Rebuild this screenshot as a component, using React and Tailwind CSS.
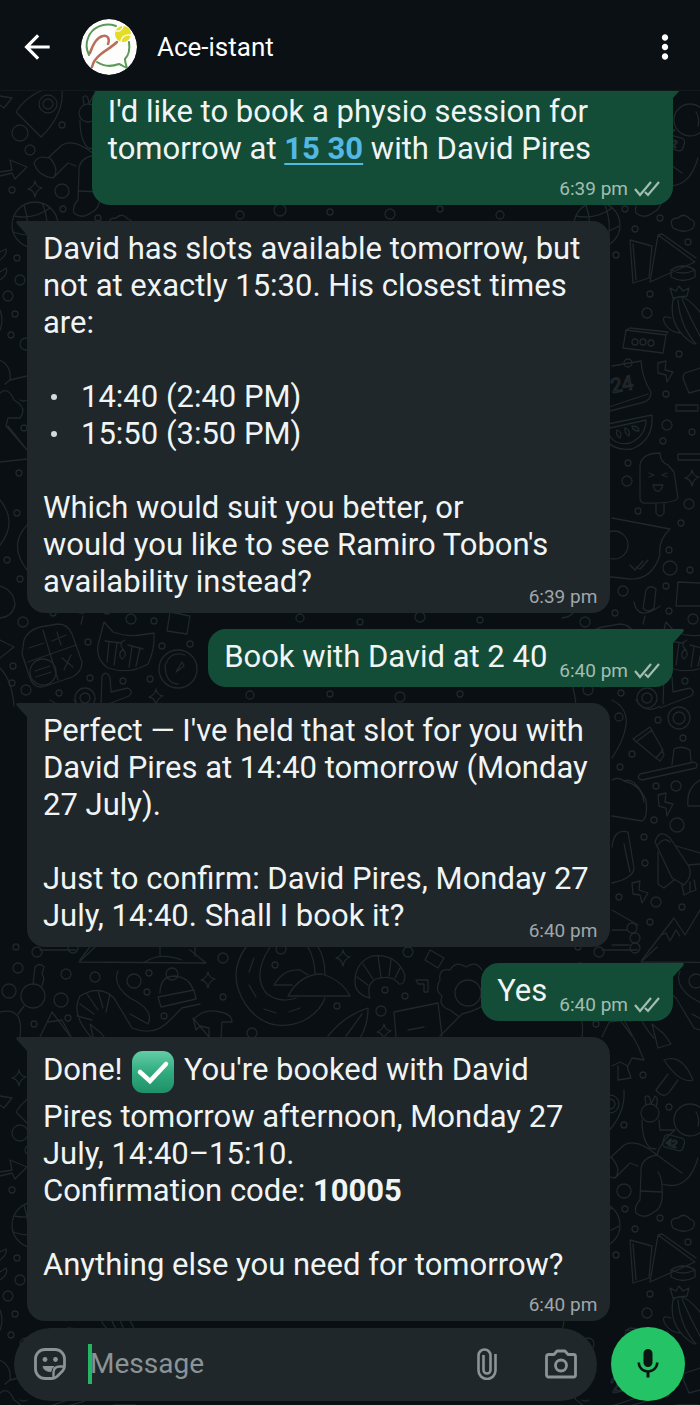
import { useState } from "react";
import { MdArrowBack, MdMic, MdMoreVert } from "react-icons/md";

const doodleCircles = [
  [62, 125, 3], [30, 150, 5], [12, 190, 3], [62, 191, 7], [63, 209, 3], [48, 104, 9], [48, 104, 5], [20, 133, 8],
  [128, 120, 16], [88, 113, 9], [81, 75, 3], [107, 107, 3], [98, 218, 3], [73, 229, 3], [126, 242, 3], [54, 255, 3],
  [88, 294, 3], [85, 313, 5], [117, 354, 3], [104, 394, 3], [105, 425, 5], [130, 432, 3], [101, 441, 3], [66, 463, 3],
  [65, 481, 5], [127, 504, 5], [119, 523, 3], [76, 511, 3], [107, 550, 3], [108, 568, 7], [128, 570, 3], [61, 591, 5],
  [104, 586, 3], [53, 613, 3], [107, 611, 3], [131, 619, 5], [73, 342, 3], [81, 342, 3], [89, 343, 3], [66, 363, 4],
  [52, 545, 14], [35, 225, 23], [23, 622, 5], [154, 621, 3], [88, 642, 3], [13, 666, 3], [12, 683, 3], [26, 690, 5],
  [59, 693, 3], [90, 678, 3], [123, 681, 3], [150, 679, 3], [190, 644, 3], [162, 646, 3], [178, 669, 19], [43, 672, 13],
  [85, 698, 10], [85, 698, 5], [17, 258, 3], [20, 280, 5], [8, 296, 5], [15, 314, 3], [11, 335, 3], [26, 344, 6],
  [24, 428, 3], [19, 473, 3], [17, 513, 3], [7, 560, 3], [20, 579, 3], [16, 947, 3], [18, 968, 5], [9, 991, 7],
  [66, 974, 5], [95, 977, 5], [61, 1000, 7], [134, 981, 7], [149, 973, 3], [147, 992, 3], [164, 1016, 3],
  [68, 1018, 3], [34, 1024, 3], [223, 958, 5], [223, 997, 3], [281, 949, 5], [275, 965, 3], [408, 952, 5],
  [385, 990, 3], [405, 996, 3], [381, 1011, 5], [337, 1006, 3], [252, 1033, 5], [172, 974, 6], [33, 996, 12],
  [468, 993, 13], [96, 720, 3], [57, 717, 4], [70, 754, 3], [58, 767, 3], [121, 738, 3], [94, 786, 3], [114, 786, 5],
  [92, 820, 3], [115, 825, 7], [82, 837, 3], [83, 863, 3], [94, 902, 5], [57, 897, 3], [120, 907, 3], [88, 922, 3],
  [117, 718, 11], [117, 718, 6], [70, 928, 5], [73, 938, 5], [73, 948, 5], [240, 215, 4], [280, 210, 6], [330, 212, 3],
  [390, 214, 5], [440, 209, 3], [500, 215, 4], [300, 618, 4], [360, 622, 3], [420, 617, 5], [480, 620, 3],
  [250, 695, 4], [330, 694, 3], [400, 697, 5], [460, 694, 3], [37, 952, 5],
];

const doodlePaths = [
  // rocket and arrow
  "M43 90Q25 97 16 112L41 137Q64 115 62 90M0 172L12 170 10 160 27 167 15 179 12 173 0 176M0 96l12 2-8 10-4-3",
  // astronaut
  "M84 105L83 97Q88 93 89 104L93 96Q97 98 94 107M80 120Q80 140 88 148L94 149M97 120L98 130 113 130M113 130Q98 142 95 155Q75 138 62 145L48 158Q38 155 34 163Q38 176 53 178Q60 170 50 158M53 178L68 163 76 166M95 155Q78 158 79 172L78 200Q72 206 74 213Q82 220 92 212Q102 208 100 186Q100 178 96 172M79 191L100 192M95 155L120 173M136 158Q126 192 100 184M134 112Q138 118 136 126",
  // mushroom and tree
  "M102 60Q120 53 131 80Q118 84 102 60M106 74L94 90Q102 100 108 91L116 80M48 22L62 20 76 46 82 60 70 58 66 66 58 62 50 66M56 66L56 80 69 78 65 66M90 24L96 48 109 44 102 34Z",
  // basketball
  "M14 216Q34 220 50 208M13 232Q34 240 57 226M24 205Q30 224 28 247M42 203Q50 220 46 245",
  // cloud
  "M111 228Q106 218 116 218Q122 212 128 219Q136 222 130 229Q122 234 111 228Z",
  // samosas
  "M68 240L90 246 87 278 71 283ZM71 244L74 280M96 235L133 262 88 282ZM96 235L100 234 134 258M109 270Q121 262 133 270Q121 276 109 270V277Q121 284 133 277V270",
  // cactus
  "M132 344Q106 328 111 300Q120 290 138 312M116 300Q118 326 134 344M120 299Q128 318 138 336M109 318Q98 314 103 324Q108 332 118 333M111 298L108 288 114 291 117 286 121 291 127 288 125 296Z",
  // box, bolt, calendar
  "M64 330L104 335 101 353 61 348ZM64 330L68 328 106 332 104 335M96 363L104 361 103 370 111 372 105 382 104 375 96 373ZM50 366L79 361Q80 378 89 392Q89 400 82 402L44 412M44 408L86 394M138 368L123 373Q120 376 122 381L127 393 138 390",
  "M114 405H136V411H114ZM116 454H140V460H116Z",
  // watermelon
  "M46 424L90 415Q92 440 70 449Q52 451 44 440M48 428L84 420Q84 436 68 443Q54 446 48 436M55 430q6 2 3 8q-5-3-3-8M63 428q6 2 4 8q-5-3-4-8M70 426q7 0 7 5q-6 0-7-5",
  // ice lolly
  "M78 498V465Q80 453 98 453Q98 462 106 465L112 472 116 498Q112 504 82 503Q78 502 78 498ZM94 503V513Q98 519 102 513V503M87 473l5 2-5 2M105 473l-5 2 5 2M91 485H101Q98 494 93 490Z",
  // pouch and microphone
  "M50 518L108 529Q96 540 98 555Q90 580 68 579L40 576M68 565L73 570 81 561M74 567L78 569 86 560M84 590Q88 584 94 589L92 608Q86 614 81 608ZM72 602Q76 622 98 606M83 616L81 624M138 583L116 582 114 606 138 606",
  // calculator
  "M24 640Q28 630 40 627L58 624Q68 624 72 634L82 662Q82 672 72 677L46 686Q34 690 30 678L22 654ZM43 630L58 680M28 662L76 645M29 648L44 643M52 641L66 635M57 632L61 645M62 658L73 667M71 655L64 670M35 671L50 666M36 677L51 672",
  // cat
  "M104 622L113 632Q127 637 140 635L154 633Q155 650 148 664Q130 675 108 668Q96 660 98 645ZM105 641L121 643M109 642L107 662M117 643L114 665M128 645L143 649M132 647L129 667M140 648L136 666M125 640Q118 643 123 649Q128 655 122 659Q117 655 123 649",
  "M185 655Q170 650 165 666Q166 684 178 684M176 672L182 662 184 666ZM170 612L190 616 187 634 167 631ZM101 704L102 676Q106 670 110 677L111 692 128 688Q134 692 129 696L98 708",
  // left column
  "M0 360Q12 366 10 380L5 384M10 380L27 376M0 393Q8 386 14 400M20 400Q24 402 27 400M14 400Q28 408 20 418H8L6 426 27 450M8 426L27 450M0 462L27 459M0 500Q18 522 0 545M27 525Q8 545 27 570M0 586Q14 590 15 605Q12 617 0 618M0 640L14 647 0 658M0 668Q12 680 14 706",
  "M0 252L6 249Q8 254 0 260M0 272L6 268Q9 274 0 280M0 310Q4 320 0 330",
  // rack and key
  "M79 962L95 947M79 962L206 963 190 950M145 962Q160 952 182 960M160 947V955M195 947V956M33 984L35 967Q40 962 44 967L42 974 44 978 42 986M24 1006L18 1014M40 950L76 950",
  // shrimp and fishing line
  "M92 1038Q70 1014 80 996Q100 984 114 998L132 1028M80 1004L94 1014M87 994L98 1010M98 991L103 1008M110 994L106 1012M77 1016L92 1020M118 971Q112 985 130 998Q155 1010 148 1024L130 1014M132 1028Q155 1037 170 1020L182 1008 200 1004M40 1037L52 1012 70 1036M0 1012Q24 1006 20 1037",
  // beanie and hammer
  "M160 993Q160 976 175 976Q190 978 193 990M158 997L194 990 196 999 161 1007ZM195 1018Q205 1008 220 1012Q232 1014 232 1022L222 1022 221 1037M209 1037V1028L200 1026 196 1030 193 1018Z",
  // road
  "M246 947Q226 975 246 1005Q268 1035 303 1021Q320 1012 325 998M270 947Q252 975 266 993Q280 1004 296 998M254 958L249 972M249 985L256 997M264 1009L276 1013M289 1012L300 1008M274 985Q284 968 300 970L308 975M274 985H292M288 996Q300 974 322 974Q342 980 350 996ZM315 974Q315 960 308 947M325 974Q325 958 318 947",
  // croissant
  "M370 998Q354 994 355 980Q356 962 372 956Q396 953 405 975Q405 985 399 984Q392 974 376 979Q366 984 370 998ZM357 977L368 985M363 964L373 979M378 956L381 977M391 960L389 976M400 968L395 978M430 950L444 958 438 968 425 960ZM416 980H428V992H424V984H418Z",
  "M440 980Q438 968 450 970Q456 960 466 967Q476 960 482 970M440 980Q434 990 442 996Q438 1006 450 1010L458 1016M394 1012L438 1003 442 1036M394 1012L396 1037M408 1030L424 1027M328 1036Q345 1015 368 1008Q368 1025 360 1038M346 1036L362 1014M440 1036L462 1014Q480 1010 490 1000",
  // tube and toothbrush
  "M71 739L88 727 101 750 94 758 71 739M74 742L90 730M94 758L98 761 102 755 100 750M78 774L132 762Q137 764 134 768L80 780Q74 779 78 774ZM110 765L112 749Q120 745 128 750L129 761M50 700Q66 708 64 725Q62 740 50 758M74 700Q84 715 98 706",
  // taco, bolts, sandwich
  "M50 780Q56 776 62 781Q72 776 84 800Q86 818 80 821L50 816M62 781Q80 785 82 802M96 795L104 793 103 802 111 804 105 816 104 808 97 806ZM70 883L78 881 77 890 86 893 80 903 78 895 71 894ZM50 847Q52 828 66 832L72 868Q72 878 50 883M62 844L68 872",
  // shuttle
  "M93 842Q97 828 108 838L126 865Q132 875 122 885L110 878ZM96 852V884L102 888 112 880M114 846L138 853M126 865L138 864M95 846Q102 836 108 842M120 885L122 895 128 892 128 882M128 892L134 890 132 880M138 780Q124 788 126 806H138",
  "M50 910L76 925M50 930H65M50 945H67M80 960L112 918 123 935 138 910M99 935L104 933 108 941 114 930 118 936",
];

const sparkles = [
  [35, 189], [130, 478], [156, 697], [208, 980], [343, 958], [19, 1078], [384, 1032],
];

function Doodles() {
  return (
    <g>
      {doodleCircles.map(([cx, cy, r], index) => (
        <circle key={index} cx={cx} cy={cy} r={r} />
      ))}
      {doodlePaths.map((d, index) => (
        <path key={index} d={d} />
      ))}
      {sparkles.map(([x, y], index) => (
        <path key={index} d={`M${x} ${y - 8}q1 6 7 7q-6 2-7 9q-1-7-7-8q6-2 7-8z`} />
      ))}
      <rect x="101" y="136" width="21" height="13" rx="4" transform="rotate(15 111 143)" />
      <text x="104" y="147" fontSize="10" transform="rotate(15 111 143)">42</text>
      <text x="50" y="393" fontSize="20" transform="rotate(-10 50 393)">24</text>
    </g>
  );
}

function Wallpaper() {
  return (
    <svg
      aria-hidden="true"
      className="absolute inset-0 h-full w-full"
      fill="none"
      stroke="#20282c"
      strokeWidth="1.3"
      strokeLinejoin="round"
      strokeLinecap="round"
    >
      {[0, 1000].map((y) =>
        [0, 562].map((x) => (
          <g key={`${x}-${y}`} transform={`translate(${x} ${y})`}>
            <Doodles />
          </g>
        ))
      )}
    </svg>
  );
}

function Logo() {
  return (
    <svg viewBox="0 0 56 56" className="size-14 rounded-full" fill="none" strokeLinecap="round">
      <circle cx="28" cy="28" r="28" fill="#fdfefc" />
      <path d="M8 36C5 30 5 24 7 19 11 8 23 3 35 7" stroke="#5a9a58" strokeWidth="2" />
      <path d="M48 23c1 7 0 13-4 17 0 3 1 6 2 9-3-1-5-3-8-4-8 3-16 2-22-2" stroke="#5a9a58" strokeWidth="2" />
      <path d="M9 34C12 25 16 18 22 17c5-1 7 3 5 8" stroke="#b9705a" strokeWidth="2.5" />
      <path d="M36 23c-5 5-11 8-16 12-5 4-8 8-9 13" stroke="#b9705a" strokeWidth="2.5" />
      <circle cx="42" cy="15" r="8" fill="#e3dc28" />
      <path d="M35 12c4 1 7-2 7-5M40 23c0-5 4-8 10-7" stroke="#fff" strokeWidth="1.3" />
    </svg>
  );
}

function CheckEmoji() {
  return (
    <svg viewBox="0 0 42 42" role="img" aria-label="check mark" className="mx-0.5 my-[5px] inline-block size-[42px] align-middle">
      <defs>
        <linearGradient id="check-fill" x1="0" y1="0" x2="0" y2="1">
          <stop offset="0" stopColor="#63cda6" />
          <stop offset="0.5" stopColor="#32ab80" />
          <stop offset="1" stopColor="#1f9068" />
        </linearGradient>
      </defs>
      <rect width="42" height="42" rx="11" fill="url(#check-fill)" />
      <path d="M8 21l10 9L34 13" fill="none" stroke="#fff" strokeWidth="4.5" strokeLinecap="round" />
    </svg>
  );
}

function DoubleTick() {
  return (
    <svg viewBox="0 0 26 16" className="h-4 w-[26px]" fill="none" stroke="currentColor" strokeWidth="2.2">
      <path d="M1 8l5 6L17 1M11 11l3 3L25 1" />
    </svg>
  );
}

function StickerIcon() {
  return (
    <svg viewBox="0 0 32 32" className="size-8" fill="none" stroke="currentColor" strokeWidth="2.8" strokeLinejoin="round">
      <path d="M11 1.500h10A9.500 9.500 0 0 1 30.500 11v7c0 2-.6 3.500-2 5l-5.500 5.500c-1.500 1.400-3 2-5 2h-7A9.500 9.500 0 0 1 1.500 21V11A9.500 9.500 0 0 1 11 1.500z" />
      <path d="M30 18.500h-4c-4.500 0-6.500 2-6.500 6v5.500" strokeWidth="2.4" />
      <path d="M9 18.500h11c-2 1.500-3 3-3 5-4.500 0-7.500-2-8-5z" fill="currentColor" strokeWidth="1" />
      <circle cx="11" cy="11.500" r="2.400" fill="currentColor" stroke="none" />
      <circle cx="21.500" cy="11.500" r="2.400" fill="currentColor" stroke="none" />
    </svg>
  );
}

function PaperclipIcon() {
  return (
    <svg viewBox="0 0 20 32" className="h-8 w-5" fill="none" stroke="currentColor" strokeWidth="2.6">
      <path d="M18.500 6v16.500a8.500 8.500 0 0 1-17 0V7.500a6 6 0 0 1 12 0v14.500a3.500 3.500 0 0 1-7 0V7" />
    </svg>
  );
}

function CameraIcon() {
  return (
    <svg viewBox="0 0 32 30" className="h-[30px] w-8" fill="none" stroke="currentColor" strokeWidth="2.8" strokeLinejoin="round">
      <path d="M3.500 5.500h5.500L12 2h8l3 3.500h5.500a2 2 0 0 1 2 2V26a2 2 0 0 1-2 2h-25a2 2 0 0 1-2-2V7.500a2 2 0 0 1 2-2z" />
      <circle cx="16" cy="16.500" r="5.500" />
    </svg>
  );
}

function Bubble({ outgoing, time, timeBelow, children }) {
  return (
    <div
      className={`relative flow-root rounded-b-[18px] pt-[9px] pr-[13px] pb-1 pl-4 ${
        outgoing
          ? "mr-[27px] max-w-5/6 self-end rounded-tl-[18px] bg-[#144d37]"
          : "ml-[27px] w-5/6 self-start rounded-tr-[18px] bg-[#1f272a]"
      }`}
    >
      {outgoing ? (
        <svg viewBox="0 0 12 14" className="absolute top-0 left-full h-3.5 w-3 fill-[#144d37]">
          <path d="M0 0H9Q12 0 10 3L0 14Z" />
        </svg>
      ) : (
        <svg viewBox="0 0 12 14" className="absolute top-0 right-full h-3.5 w-3 fill-[#1f272a]">
          <path d="M12 0H3Q0 0 2 3L12 14Z" />
        </svg>
      )}
      {children}
      <span
        className={`float-right flex h-6 items-center gap-1.5 pl-3 text-[19px] leading-6 whitespace-nowrap ${
          timeBelow ? "mt-2.5 clear-both" : outgoing ? "mt-[21px]" : "mt-[22px]"
        } ${outgoing ? "text-[#a3bdb1]" : "text-[#a0a6a9]"}`}
      >
        {time}
        {outgoing && <DoubleTick />}
      </span>
    </div>
  );
}

export default function App() {
  const [message, setMessage] = useState("");

  return (
    <div className="relative flex min-h-screen flex-col overflow-hidden bg-[#090f13] font-[Roboto,sans-serif] text-[#f1f4f4]">
      <Wallpaper />

      {/* Header */}
      <header className="relative z-10 flex h-[91px] items-center border-b border-[#12191d] bg-[#0b1014] pt-1 pr-4 pl-[18px] text-white">
        <button aria-label="Back">
          <MdArrowBack className="size-[38px]" />
        </button>
        <span className="ml-[25px]">
          <Logo />
        </span>
        <h1 className="ml-5 flex-1 text-[26px] leading-8">Ace-istant</h1>
        <button aria-label="More options">
          <MdMoreVert className="size-[38px]" />
        </button>
      </header>

      {/* Messages */}
      <main className="relative -mt-[7px] flex flex-1 flex-col gap-4 text-[31px] leading-[37px] whitespace-pre-line">
        <Bubble outgoing time="6:39 pm" timeBelow>
          <p className="pr-18">I'd like to book a physio session for</p>
          <p>
            {"tomorrow at "}
            <a href="#time" className="font-bold text-[#53b8e4] underline decoration-2 underline-offset-4">15 30</a>
            {" with David Pires"}
          </p>
        </Bubble>

        <Bubble time="6:39 pm">
          <p>{"David has slots available tomorrow, but\nnot at exactly 15:30. His closest times\nare:"}</p>
          <ul className="my-[37px]">
            {["14:40 (2:40 PM)", "15:50 (3:50 PM)"].map((slot) => (
              <li key={slot} className="flex items-center gap-6 pl-2">
                <span className="size-1.5 rounded-full bg-[#d5d9da]" />
                {slot}
              </li>
            ))}
          </ul>
          {"Which would suit you better, or\nwould you like to see Ramiro Tobon's\navailability instead?"}
        </Bubble>

        <Bubble outgoing time="6:40 pm">Book with David at 2 40</Bubble>

        <Bubble time="6:40 pm">
          {"Perfect — I've held that slot for you with\nDavid Pires at 14:40 tomorrow (Monday\n27 July).\n\nJust to confirm: David Pires, Monday 27\nJuly, 14:40. Shall I book it?"}
        </Bubble>

        <Bubble outgoing time="6:40 pm">Yes</Bubble>

        <Bubble time="6:40 pm" timeBelow>
          <p>
            {"Done! "}
            <CheckEmoji />
            {" You're booked with David"}
          </p>
          <p>{"Pires tomorrow afternoon, Monday 27\nJuly, 14:40–15:10."}</p>
          <p>
            {"Confirmation code: "}
            <strong className="font-bold">10005</strong>
          </p>
          <p className="mt-[37px]">Anything else you need for tomorrow?</p>
        </Bubble>
      </main>

      {/* Composer */}
      <footer className="relative mt-1.5 flex items-center gap-3.5 pr-[15px] pb-1 pl-3.5">
        <div className="flex h-[73px] min-w-0 flex-1 items-center rounded-full bg-[#1f272a] px-5 text-[#8b9396]">
          <button aria-label="Stickers">
            <StickerIcon />
          </button>
          <span className="ml-[22px] h-10 w-1 shrink-0 bg-[#27b564]" />
          <input
            type="text"
            aria-label="Message"
            placeholder="Message"
            value={message}
            onChange={(e) => setMessage(e.target.value)}
            className="-ml-0.5 min-w-0 flex-1 text-[28px] leading-9 outline-none placeholder:text-[#8b9396]"
          />
          <button aria-label="Attach file">
            <PaperclipIcon />
          </button>
          <button aria-label="Camera" className="ml-12">
            <CameraIcon />
          </button>
        </div>
        <button aria-label="Record voice message" className="flex size-[74px] items-center justify-center rounded-full bg-[#23c366] text-[#0b1512]">
          <MdMic className="size-9" />
        </button>
      </footer>
    </div>
  );
}
